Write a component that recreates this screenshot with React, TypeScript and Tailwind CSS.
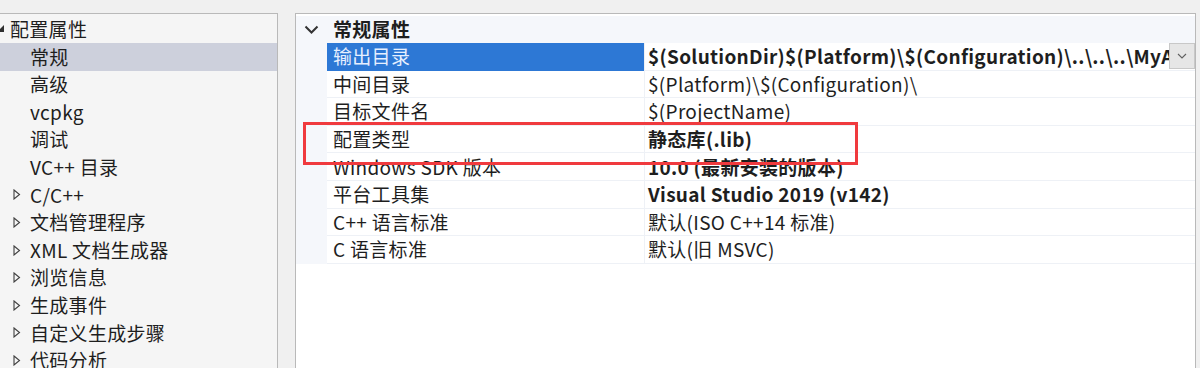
const FONT = { fontFamily: '"Segoe UI", "Noto Sans CJK SC", sans-serif' };

type TreeItem = { label: string; kind: 'root' | 'leaf' | 'closed'; selected?: boolean };

const tree: TreeItem[] = [
  { label: '配置属性', kind: 'root' },
  { label: '常规', kind: 'leaf', selected: true },
  { label: '高级', kind: 'leaf' },
  { label: 'vcpkg', kind: 'leaf' },
  { label: '调试', kind: 'leaf' },
  { label: 'VC++ 目录', kind: 'leaf' },
  { label: 'C/C++', kind: 'closed' },
  { label: '文档管理程序', kind: 'closed' },
  { label: 'XML 文档生成器', kind: 'closed' },
  { label: '浏览信息', kind: 'closed' },
  { label: '生成事件', kind: 'closed' },
  { label: '自定义生成步骤', kind: 'closed' },
  { label: '代码分析', kind: 'closed' },
];

type Prop = { name: string; value: string; bold?: boolean; selected?: boolean };

const props: Prop[] = [
  { name: '输出目录', value: '$(SolutionDir)$(Platform)\\$(Configuration)\\..\\..\\..\\MyApp\\lib\\', bold: true, selected: true },
  { name: '中间目录', value: '$(Platform)\\$(Configuration)\\' },
  { name: '目标文件名', value: '$(ProjectName)' },
  { name: '配置类型', value: '静态库(.lib)', bold: true },
  { name: 'Windows SDK 版本', value: '10.0 (最新安装的版本)', bold: true },
  { name: '平台工具集', value: 'Visual Studio 2019 (v142)', bold: true },
  { name: 'C++ 语言标准', value: '默认(ISO C++14 标准)' },
  { name: 'C 语言标准', value: '默认(旧 MSVC)' },
];

function ClosedArrow() {
  return (
    <svg width="8" height="11" viewBox="0 0 8 11" className="shrink-0">
      <path d="M1 1 L6.5 5.5 L1 10 Z" fill="none" stroke="#404040" strokeWidth="1.1" />
    </svg>
  );
}

function TreeRow({ item }: { item: TreeItem }) {
  return (
    <div
      className={`h-[27.6px] flex items-center whitespace-nowrap ${item.selected ? 'bg-[#cdd0dc]' : ''}`}
    >
      {item.kind === 'root' && (
        <>
          <svg width="4" height="8" viewBox="0 0 4 8" className="shrink-0">
            <path d="M4 0 L4 7 L-3 7 Z" fill="#303030" />
          </svg>
          <span className="ml-[6px]">{item.label}</span>
        </>
      )}
      {item.kind === 'leaf' && <span className="ml-[30px]">{item.label}</span>}
      {item.kind === 'closed' && (
        <>
          <span className="ml-[13px] flex">
            <ClosedArrow />
          </span>
          <span className="ml-[9px]">{item.label}</span>
        </>
      )}
    </div>
  );
}

function PropRow({ p }: { p: Prop }) {
  return (
    <div className="flex h-[27.6px]">
      <div className="w-[31px] shrink-0 bg-[#f5f7fb]" />
      <div
        className={`w-[317px] shrink-0 flex items-center pl-[6px] whitespace-nowrap border-b ${
          p.selected ? 'bg-[#2d78d5] text-[#e6efff] border-[#2d78d5]' : 'border-[#eef1f6]'
        }`}
      >
        {p.name}
      </div>
      <div className="w-px shrink-0 bg-[#eef1f6]" />
      <div className="flex-1 min-w-0 flex items-center border-b border-[#eef1f6]">
        <span className={`pl-[3px] flex-1 min-w-0 overflow-hidden whitespace-nowrap ${p.bold ? 'font-bold' : ''}`}>
          {p.value}
        </span>
        {p.selected && (
          <div className="w-[26px] h-[26px] shrink-0 bg-[#e6e6e6] border border-[#c8c8c8] flex items-center justify-center">
            <svg width="10" height="6" viewBox="0 0 10 6">
              <path d="M1 1 L5 5 L9 1" fill="none" stroke="#606060" strokeWidth="1.1" />
            </svg>
          </div>
        )}
      </div>
    </div>
  );
}

export default function App() {
  return (
    <div
      className="w-[1200px] h-[368px] bg-[#f0f0f0] overflow-hidden flex pt-[13px] text-[19px] tracking-[0.3px] text-[#1e1e1e] relative"
      style={FONT}
    >
      {/* Left tree */}
      <div className="w-[278px] shrink-0 bg-[#f5f5f5] border-t border-r border-[#b9b9b9] pt-[1.5px]">
        {tree.map(item => (
          <TreeRow key={item.label} item={item} />
        ))}
      </div>

      {/* Property grid */}
      <div className="ml-[17px] w-[901px] shrink-0 bg-white border-t border-l border-r border-[#b9b9b9] pt-[1.5px]">
        <div className="flex h-[27.6px] bg-[#f5f7fb] items-center">
          <div className="w-[31px] flex justify-center">
            <svg width="15" height="9" viewBox="0 0 15 9">
              <path d="M1.5 1.5 L7.5 7.5 L13.5 1.5" fill="none" stroke="#333" strokeWidth="2" />
            </svg>
          </div>
          <span className="pl-[6px] font-bold">常规属性</span>
        </div>
        {props.map(p => (
          <PropRow key={p.name} p={p} />
        ))}
      </div>

      {/* Annotation box */}
      <div className="absolute left-[303px] top-[122px] w-[555px] h-[43px] border-[3px] border-[#f03a3e] pointer-events-none" />
    </div>
  );
}
